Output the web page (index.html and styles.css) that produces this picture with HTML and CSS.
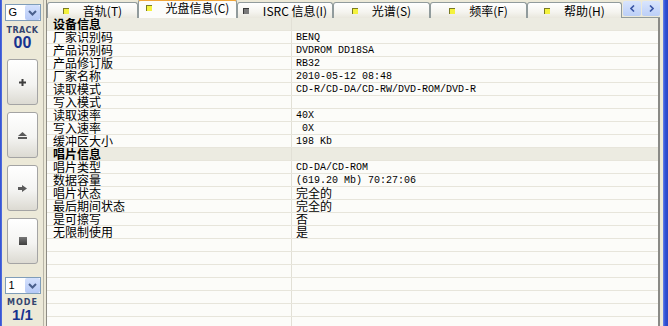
FILE: index.html
```html
<!DOCTYPE html>
<html lang="zh-CN">
<head>
    <meta charset="UTF-8">
    <title>光盘信息</title>
    <link rel="stylesheet" href="styles.css">
</head>
<body>
    <div class="frame-left"></div>

    <!-- Side panel -->
    <div class="sidebar">
        <div class="combo">
            <span>G</span>
            <div class="drop"><svg width="9" height="6" viewBox="0 0 9 6"><path d="M1 1l3.5 3.5L8 1" fill="none" stroke="#4a5f8c" stroke-width="2"/></svg></div>
        </div>
        <div class="caption">TRACK</div>
        <div class="number">00</div>

        <div class="side-btn first">
            <svg width="7" height="7" viewBox="0 0 7 7"><path d="M2.5 0h2v2.5H7v2H4.5V7h-2V4.5H0v-2h2.5z" fill="#3d3d3d"/></svg>
        </div>
        <div class="side-btn">
            <svg width="9" height="7" viewBox="0 0 9 7"><path d="M0 4L4.5 0L9 4z" fill="#5a5a5a"/><rect x="0" y="5" width="9" height="2" fill="#5a5a5a"/></svg>
        </div>
        <div class="side-btn">
            <svg width="9" height="7" viewBox="0 0 9 7"><path d="M0 2h4V0l5 3.5L4 7V5H0z" fill="#5a5a5a"/></svg>
        </div>
        <div class="side-btn">
            <svg width="8" height="8" viewBox="0 0 8 8"><defs><linearGradient id="sq" x1="0" y1="0" x2="0" y2="1"><stop offset="0" stop-color="#777"/><stop offset="1" stop-color="#3e3e3e"/></linearGradient></defs><rect width="8" height="8" fill="url(#sq)"/></svg>
        </div>

        <div class="combo lower">
            <span>1</span>
            <div class="drop"><svg width="9" height="6" viewBox="0 0 9 6"><path d="M1 1l3.5 3.5L8 1" fill="none" stroke="#4a5f8c" stroke-width="2"/></svg></div>
        </div>
        <div class="caption mode">MODE</div>
        <div class="number small">1/1</div>
    </div>

    <div class="divider"></div>

    <!-- Tabs and info list -->
    <div class="main">
        <div class="tabs">
            <div class="tab w91"><i class="ico"></i>音轨(T)</div>
            <div class="tab active w99"><i class="ico"></i>光盘信息(C)</div>
            <div class="tab w96"><i class="ico off"></i>ISRC 信息(I)</div>
            <div class="tab w97"><i class="ico"></i>光谱(S)</div>
            <div class="tab w97"><i class="ico"></i>频率(F)</div>
            <div class="tab w95"><i class="ico"></i>帮助(H)</div>
            <div class="scroller">
                <div class="arrow"><svg width="5" height="7" viewBox="0 0 5 7"><path d="M4 0.5L1 3.5L4 6.5" fill="none" stroke="#3b56a6" stroke-width="1.6"/></svg></div>
                <div class="arrow"><svg width="5" height="7" viewBox="0 0 5 7"><path d="M1 0.5L4 3.5L1 6.5" fill="none" stroke="#3b56a6" stroke-width="1.6"/></svg></div>
            </div>
        </div>

        <div class="list">
            <div class="row head"><div class="label">设备信息</div><div class="value"></div></div>
            <div class="row"><div class="label">厂家识别码</div><div class="value">BENQ</div></div>
            <div class="row"><div class="label">产品识别码</div><div class="value">DVDROM DD18SA</div></div>
            <div class="row"><div class="label">产品修订版</div><div class="value">RB32</div></div>
            <div class="row"><div class="label">厂家名称</div><div class="value">2010-05-12 08:48</div></div>
            <div class="row"><div class="label">读取模式</div><div class="value">CD-R/CD-DA/CD-RW/DVD-ROM/DVD-R</div></div>
            <div class="row"><div class="label">写入模式</div><div class="value"></div></div>
            <div class="row"><div class="label">读取速率</div><div class="value">40X</div></div>
            <div class="row"><div class="label">写入速率</div><div class="value">&nbsp;0X</div></div>
            <div class="row"><div class="label">缓冲区大小</div><div class="value">198 Kb</div></div>
            <div class="row head"><div class="label">唱片信息</div><div class="value"></div></div>
            <div class="row"><div class="label">唱片类型</div><div class="value">CD-DA/CD-ROM</div></div>
            <div class="row"><div class="label">数据容量</div><div class="value">(619.20 Mb) 70:27:06</div></div>
            <div class="row"><div class="label">唱片状态</div><div class="value cjk">完全的</div></div>
            <div class="row"><div class="label">最后期间状态</div><div class="value cjk">完全的</div></div>
            <div class="row"><div class="label">是可擦写</div><div class="value cjk">否</div></div>
            <div class="row"><div class="label">无限制使用</div><div class="value cjk">是</div></div>
            <div class="row"><div class="label"></div><div class="value"></div></div>
            <div class="row"><div class="label"></div><div class="value"></div></div>
            <div class="row"><div class="label"></div><div class="value"></div></div>
            <div class="row"><div class="label"></div><div class="value"></div></div>
            <div class="row"><div class="label"></div><div class="value"></div></div>
            <div class="row"><div class="label"></div><div class="value"></div></div>
            <div class="row"><div class="label"></div><div class="value"></div></div>
        </div>
    </div>

    <div class="edge"></div>
    <div class="frame-right"></div>
</body>
</html>
```

FILE: styles.css
```css
body {
    margin: 0;
    width: 668px;
    height: 326px;
    overflow: hidden;
    display: flex;
    background-color: #ece9d8;
    font-family: "Noto Sans CJK SC", sans-serif;
    font-size: 12px;
    color: #000;
}
.frame-left {
    width: 2px;
    background: linear-gradient(90deg, #2e4cd0, #5673e0);
}
.frame-right {
    width: 5px;
    background: linear-gradient(90deg, #6d86e6, #3152d6 40%, #2a46c4);
}
.edge {
    width: 3px;
    background-color: #ece9d8;
}

/* side panel */
.sidebar {
    width: 41px;
    display: flex;
    flex-direction: column;
    align-items: center;
}
.combo {
    margin-top: 4px;
    width: 36px;
    height: 17px;
    box-sizing: border-box;
    border: 1px solid #7f9db9;
    background-color: #fff;
    display: flex;
    align-items: center;
    justify-content: space-between;
}
.combo span {
    padding-left: 3px;
    font-family: "Liberation Sans", sans-serif;
    font-size: 11px;
    line-height: 15px;
}
.combo .drop {
    width: 15px;
    height: 15px;
    border-radius: 2px;
    background: linear-gradient(#d4e1fd, #b6c9f6);
    display: flex;
    justify-content: center;
    align-items: center;
}
.combo.lower {
    margin-top: 13px;
}
.caption {
    margin-top: 6px;
    font-family: "DejaVu Sans", sans-serif;
    font-weight: bold;
    font-size: 8px;
    line-height: 8px;
    letter-spacing: 0.4px;
    color: #34456e;
}
.caption.mode {
    margin-top: 5px;
    letter-spacing: 1px;
}
.number {
    margin-top: 1px;
    font-family: "Liberation Sans", sans-serif;
    font-weight: bold;
    font-size: 16px;
    line-height: 14px;
    color: #17338f;
}
.number.small {
    font-size: 15px;
}
.side-btn {
    margin-top: 7px;
    width: 31px;
    height: 46px;
    box-sizing: border-box;
    border: 1px solid #a4a4a4;
    border-radius: 3px;
    background: linear-gradient(#ffffff, #f4f4f2 55%, #dcdad2);
    display: flex;
    justify-content: center;
    align-items: center;
}
.side-btn.first {
    margin-top: 9px;
}
.divider {
    width: 4px;
    box-sizing: border-box;
    border-left: 1px solid #b9b6a8;
    border-right: 1px solid #8d8b83;
}

/* tabs */
.main {
    flex: 1;
    display: flex;
    flex-direction: column;
    min-width: 0;
}
.tabs {
    height: 18px;
    display: flex;
    align-items: flex-end;
    box-sizing: border-box;
    border-bottom: 1px solid #919b9c;
}
.tab {
    height: 16px;
    margin-bottom: -1px;
    box-sizing: border-box;
    border: 1px solid #919b9c;
    border-bottom: none;
    border-radius: 3px 3px 0 0;
    background: linear-gradient(#ffffff, #f5f4ef 60%, #e9e7dd);
    display: flex;
    justify-content: center;
    align-items: center;
    gap: 14px;
    line-height: 14px;
    white-space: nowrap;
}
.tab.active {
    height: 19px;
    border-top: 2px solid #f0a63a;
    background: #fcfcfa;
    padding-bottom: 3px;
}
.w91 { width: 91px; }
.w95 { width: 95px; }
.w96 { width: 96px; }
.w97 { width: 97px; }
.w99 { width: 99px; }
.ico {
    width: 6px;
    height: 6px;
    background-color: #f4f23e;
    box-shadow: inset 1px 1px 0 #7a7a24;
}
.ico.off {
    background-color: #7a7a7a;
    box-shadow: inset 1px 1px 0 #3a3a3a;
}
.scroller {
    margin-left: 1px;
    margin-bottom: 1px;
    display: flex;
    gap: 1px;
}
.arrow {
    width: 18px;
    height: 15px;
    border-radius: 2px;
    background: linear-gradient(#d9e5fd, #bccff7);
    display: flex;
    justify-content: center;
    align-items: center;
}

/* info list */
.list {
    flex: 1;
    overflow: hidden;
    background-color: #fcfcf9;
    border-right: 2px solid #8a8a86;
}
.row {
    height: 12px;
    border-bottom: 1px solid #e7e5db;
    display: flex;
}
.row.head {
    background-color: #ecebe1;
    font-weight: bold;
}
.label {
    width: 245px;
    padding-left: 6px;
    box-sizing: border-box;
    border-right: 1px solid #e2e0d6;
    line-height: 12px;
    white-space: nowrap;
}
.value {
    padding-left: 4px;
    font-family: "Liberation Mono", monospace;
    font-size: 10px;
    line-height: 13px;
    white-space: pre;
}
.value.cjk {
    font-family: "Noto Sans CJK SC", sans-serif;
    font-size: 12px;
    line-height: 12px;
}
```
